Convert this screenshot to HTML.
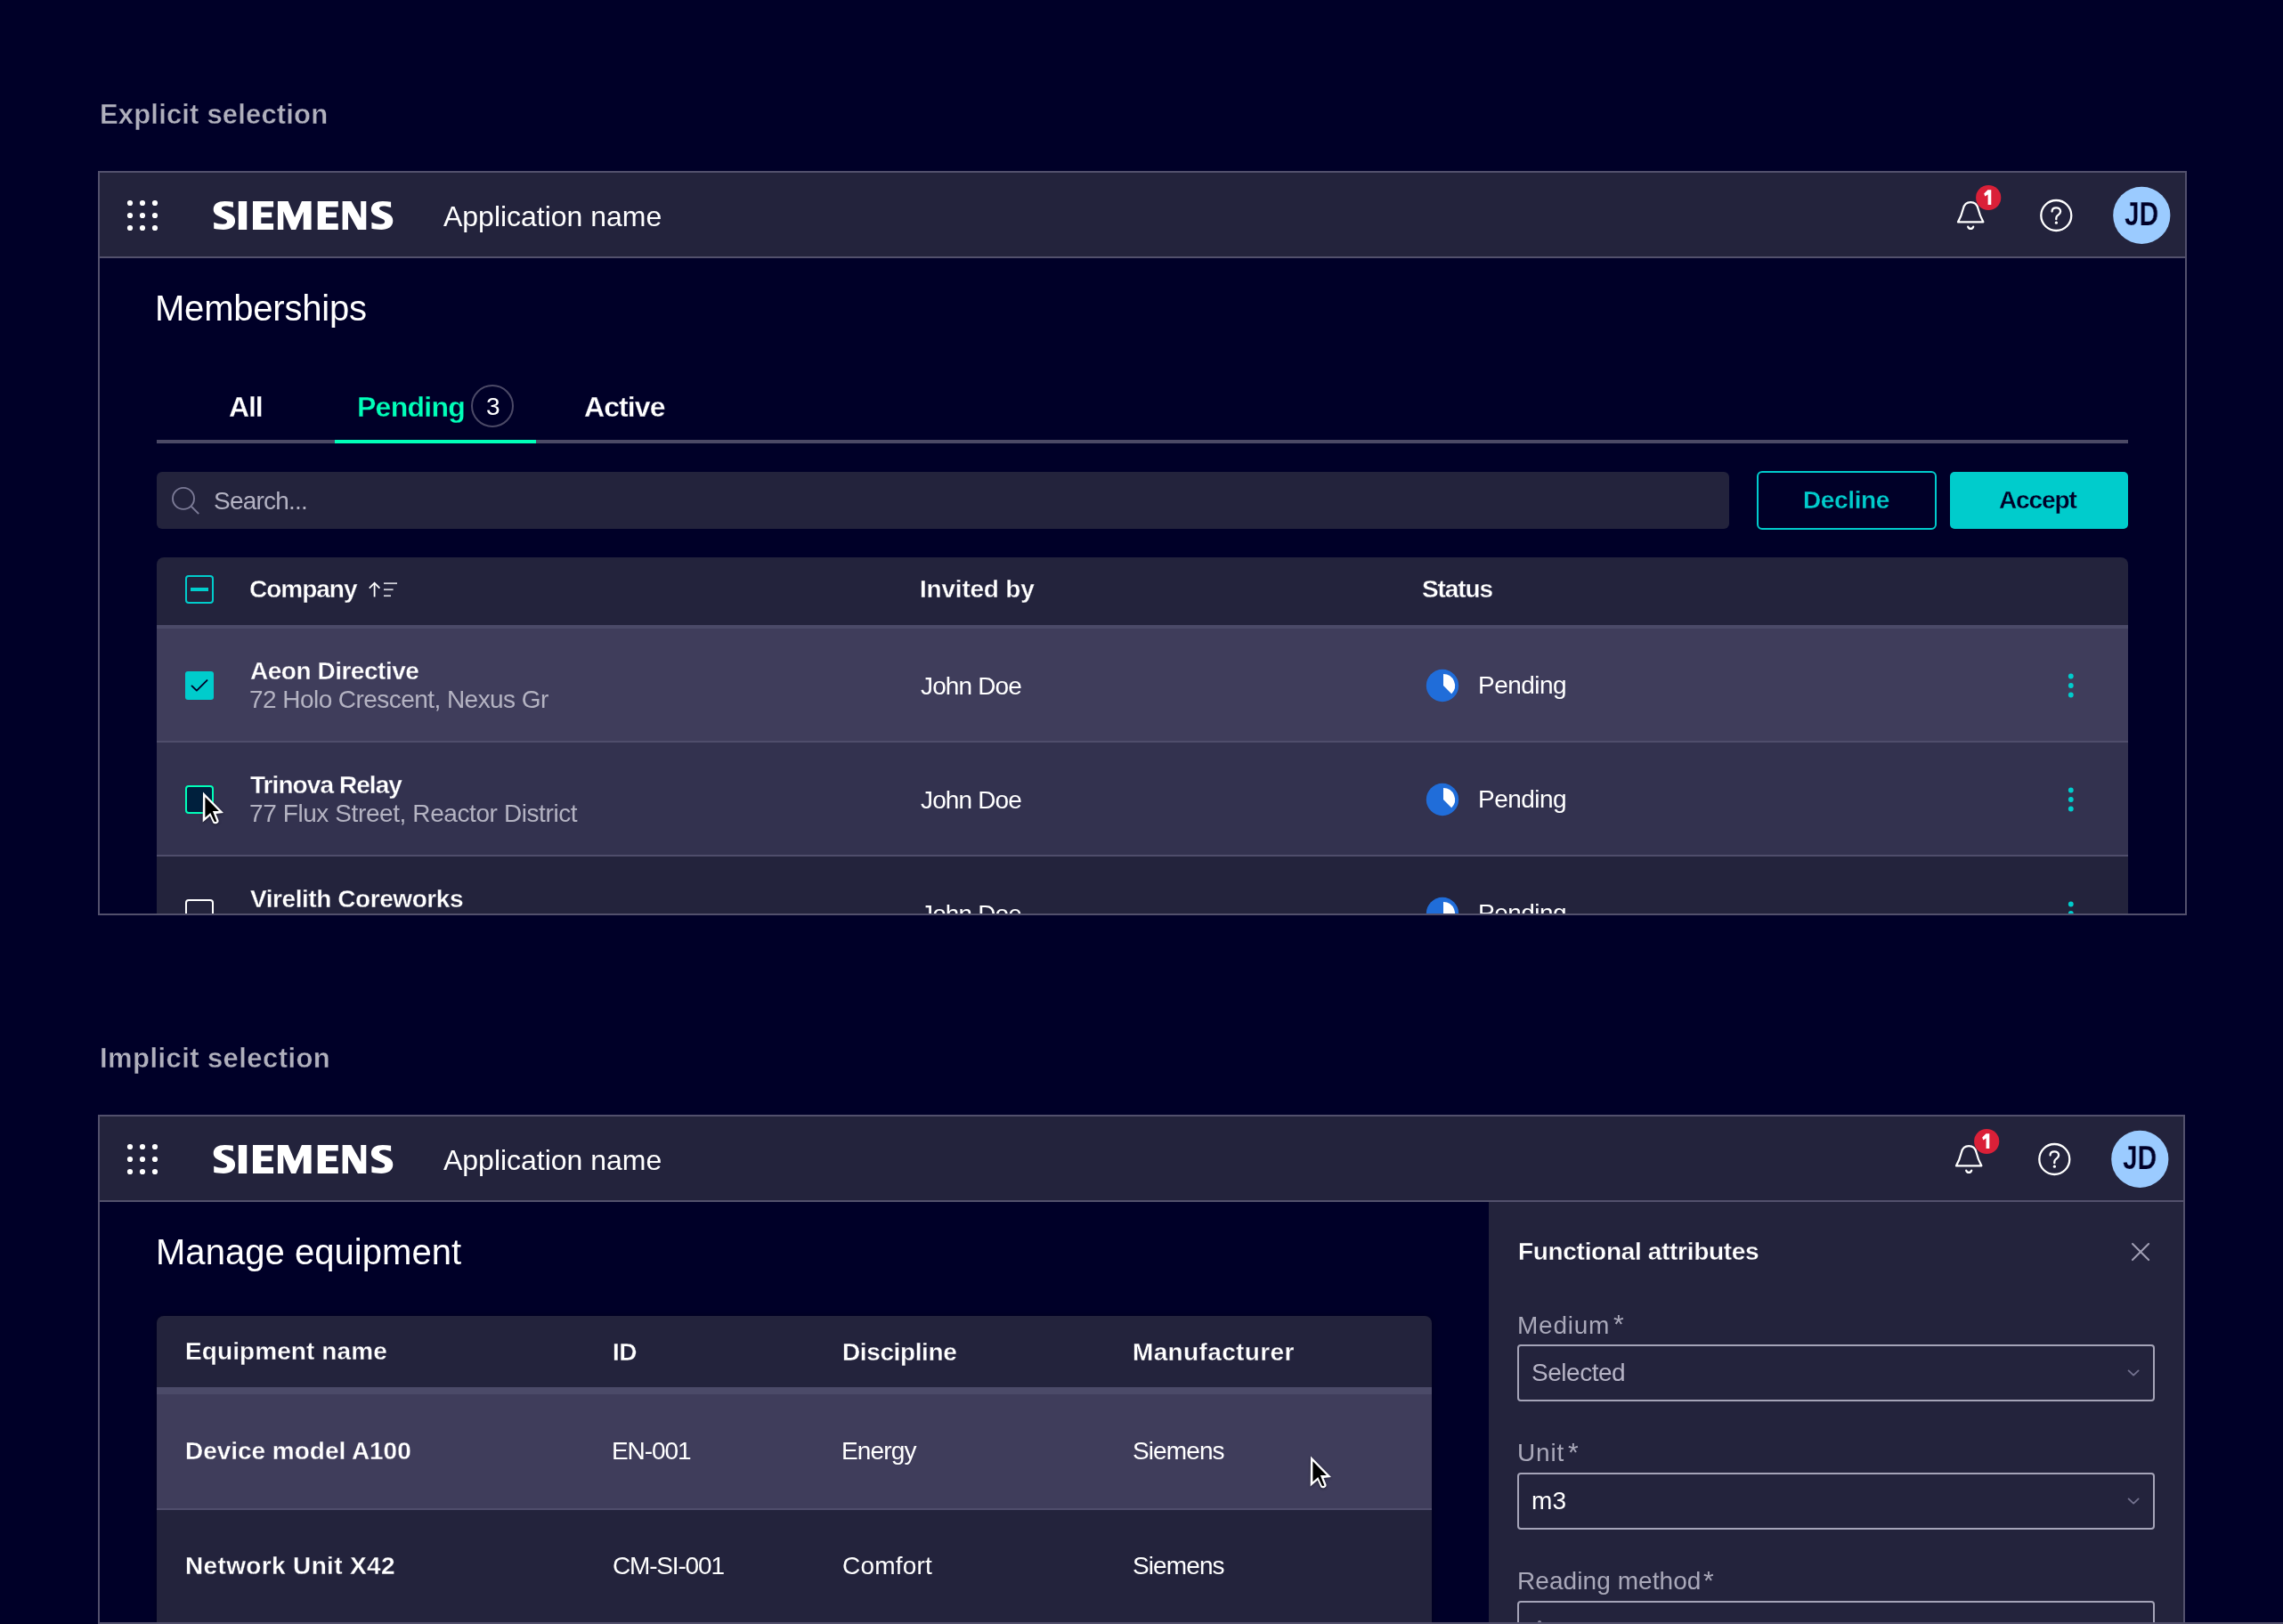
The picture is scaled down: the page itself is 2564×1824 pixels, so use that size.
<!DOCTYPE html><html><head><meta charset="utf-8"><style>
html,body{margin:0;padding:0;width:2564px;height:1824px;overflow:hidden;background:#000028;}
.a{position:absolute;}
.t{position:absolute;will-change:transform;white-space:pre;line-height:1;font-family:"Liberation Sans",sans-serif;}
body{font-family:"Liberation Sans",sans-serif;position:relative;}
</style></head><body>
<div class="t" style="left:112.20px;top:113.45px;font-size:31px;font-weight:700;color:#b0b0bd;-webkit-text-stroke:0.4px #000028;letter-spacing:0.170px;">Explicit selection</div>
<div class="t" style="left:112.20px;top:1173.45px;font-size:31px;font-weight:700;color:#b0b0bd;-webkit-text-stroke:0.4px #000028;letter-spacing:0.425px;">Implicit selection</div>
<div class="a" style="left:112px;top:194px;width:2342px;height:94px;background:#23233c;"></div>
<div class="a" style="left:112px;top:288px;width:2342px;height:2px;background:#52506c;"></div>
<svg class="a" style="left:0;top:0" width="300" height="272"><g fill="#fff"><circle cx="146" cy="228" r="3.1"/><circle cx="146" cy="242" r="3.1"/><circle cx="146" cy="256" r="3.1"/><circle cx="160" cy="228" r="3.1"/><circle cx="160" cy="242" r="3.1"/><circle cx="160" cy="256" r="3.1"/><circle cx="174" cy="228" r="3.1"/><circle cx="174" cy="242" r="3.1"/><circle cx="174" cy="256" r="3.1"/></g></svg>
<svg class="a" style="left:236.00px;top:222.00px;overflow:visible" width="220" height="40" viewBox="0 0 220 40"><g fill="#fff"><path d="M25.9 4.6 L25.9 11.1 C23 10 20 9.5 17.5 9.5 C14.5 9.5 12.8 10.5 12.8 12 C12.8 13.5 14.5 14.3 17 15.4 L22 17.7 C26 19.5 28.1 22 28.1 26 C28.1 32.5 22.5 36 15 36 C10.5 36 7 35.5 4.2 34.8 L4.2 27.8 C7.5 29 10.5 29.8 14 29.8 C17.5 29.8 19 28.5 19 26.8 C19 25 17.3 24.3 14.8 23.2 L10 21 C6 19.2 3.7 17 3.7 13 C3.7 7 9 3.9 16.5 3.9 C19.8 3.9 23 4.2 25.9 4.8 Z"/><path d="M31.8 4 L41.2 4 L41.2 36 L31.8 36 Z"/><path d="M48.00 4.00 L71.10 4.00 L71.10 10.50 L57.30 10.50 L57.30 16.60 L69.20 16.60 L69.20 22.30 L57.30 22.30 L57.30 29.10 L71.10 29.10 L71.10 36.00 L48.00 36.00 Z"/><path d="M75.90 36.00 L75.90 4.00 L87.60 4.00 L95.10 22.20 L102.90 4.00 L113.60 4.00 L113.60 36.00 L104.70 36.00 L104.70 15.80 L96.20 36.00 L91.10 36.00 L82.30 15.30 L82.30 36.00 Z"/><path d="M120.70 4.00 L143.80 4.00 L143.80 10.50 L130.00 10.50 L130.00 16.60 L141.90 16.60 L141.90 22.30 L130.00 22.30 L130.00 29.10 L143.80 29.10 L143.80 36.00 L120.70 36.00 Z"/><path d="M148.60 36.00 L148.60 4.00 L158.50 4.00 L169.20 22.90 L169.20 4.00 L175.30 4.00 L175.30 36.00 L165.90 36.00 L155.00 16.30 L155.00 36.00 Z"/><path transform="translate(177.2 0)" d="M25.9 4.6 L25.9 11.1 C23 10 20 9.5 17.5 9.5 C14.5 9.5 12.8 10.5 12.8 12 C12.8 13.5 14.5 14.3 17 15.4 L22 17.7 C26 19.5 28.1 22 28.1 26 C28.1 32.5 22.5 36 15 36 C10.5 36 7 35.5 4.2 34.8 L4.2 27.8 C7.5 29 10.5 29.8 14 29.8 C17.5 29.8 19 28.5 19 26.8 C19 25 17.3 24.3 14.8 23.2 L10 21 C6 19.2 3.7 17 3.7 13 C3.7 7 9 3.9 16.5 3.9 C19.8 3.9 23 4.2 25.9 4.8 Z"/></g></svg>
<div class="t" style="left:497.70px;top:226.70px;font-size:32px;font-weight:400;color:#ffffff;letter-spacing:-0.013px;">Application name</div>
<svg class="a" style="left:0;top:0;overflow:visible" width="1" height="1"><path d="M2199,249.4 C2202,244 2203.5,240 2204.8,234.5 C2206,229.5 2209,227.2 2213.2,227.2 C2217.4,227.2 2220.4,229.5 2221.6,234.5 C2222.9,240 2224.4,244 2227.4,249.4 Z" fill="none" stroke="#fff" stroke-width="2.2" stroke-linejoin="round"/><path d="M2210.2,254.6 A3.1,3.1 0 0 0 2216.2,254.6" fill="none" stroke="#fff" stroke-width="2.2" stroke-linecap="round"/><circle cx="2233.2" cy="222" r="14.1" fill="#da2038"/><circle cx="2309.3" cy="242" r="17" fill="none" stroke="#fff" stroke-width="2.3"/><path d="M2304.6,237.6 C2304.6,234.6 2306.8,233.3 2309.3,233.3 C2312,233.3 2314.1,235 2314.1,237.6 C2314.1,240.2 2312.3,241 2310.7,242.2 C2309.6,243 2309.3,243.8 2309.3,245.2 L2309.3,246.2" fill="none" stroke="#fff" stroke-width="2.3" stroke-linecap="round"/><circle cx="2309.4" cy="250.2" r="1.6" fill="#fff"/><circle cx="2405.3" cy="241.9" r="32.1" fill="#9bcbff"/></svg>
<svg class="a" style="left:0;top:0;overflow:visible" width="1" height="1"><path d="M2232.5,213.3 L2236.3,213.3 L2236.3,230 L2232.6,230 L2232.6,218.4 L2229.3,220.4 L2228.2,217.4 Z" fill="#fff"/></svg>
<div class="t" style="left:2385.70px;top:223.30px;font-size:36px;font-weight:700;color:#000028;-webkit-text-stroke:0.25px #9bcbff;transform:scaleX(0.8307);transform-origin:0.00px 0;">JD</div>
<div class="a" style="left:0;top:0;width:2564px;height:1824px;clip-path:inset(290px 110px 798px 112px)">
<div class="t" style="left:174.30px;top:326.30px;font-size:40px;font-weight:400;color:#ffffff;letter-spacing:-0.208px;">Memberships</div>
<div class="a" style="left:176px;top:494px;width:2214px;height:4px;background:#4b4966;"></div>
<div class="a" style="left:376px;top:494px;width:226px;height:4px;background:#00ffb9;"></div>
<div class="t" style="left:256.60px;top:440.90px;font-size:32px;font-weight:700;color:#ffffff;-webkit-text-stroke:0.3px #000028;letter-spacing:-1.150px;">All</div>
<div class="t" style="left:400.50px;top:440.90px;font-size:32px;font-weight:700;color:#00ffb9;-webkit-text-stroke:0.3px #000028;letter-spacing:-0.745px;">Pending</div>
<div class="a" style="left:529px;top:432px;width:48px;height:48px;box-sizing:border-box;border:2px solid #4b4966;border-radius:50%"></div>
<div class="t" style="left:545.50px;top:442.80px;font-size:28px;font-weight:400;color:#ffffff;">3</div>
<div class="t" style="left:656.30px;top:441.10px;font-size:32px;font-weight:700;color:#ffffff;-webkit-text-stroke:0.3px #000028;letter-spacing:-0.910px;">Active</div>
<div class="a" style="left:176px;top:530px;width:1766px;height:64px;background:#23233c;border-radius:6px"></div>
<svg class="a" style="left:0;top:0;overflow:visible" width="1" height="1"><circle cx="206" cy="559.9" r="12" fill="none" stroke="#7b7a96" stroke-width="1.9"/><path d="M214.8,568.7 L223.2,577.1" stroke="#7b7a96" stroke-width="2" stroke-linecap="butt"/></svg>
<div class="t" style="left:240.20px;top:548.50px;font-size:28px;font-weight:400;color:#b3b2c2;letter-spacing:-0.784px;">Search...</div>
<div class="a" style="left:1973px;top:529px;width:202px;height:66px;box-sizing:border-box;border:2px solid #00cccc;border-radius:6px"></div>
<div class="t" style="left:2024.70px;top:548.10px;font-size:28px;font-weight:700;color:#00cccc;-webkit-text-stroke:0.3px #000028;letter-spacing:-0.371px;">Decline</div>
<div class="a" style="left:2190px;top:530px;width:200px;height:64px;background:#00cccc;border-radius:5px"></div>
<div class="t" style="left:2245.00px;top:548.10px;font-size:28px;font-weight:700;color:#000028;-webkit-text-stroke:0.3px #00cccc;letter-spacing:-1.108px;">Accept</div>
<div class="a" style="left:176px;top:626px;width:2214px;height:400px;background:#23233c;border-radius:8px 8px 0 0"></div>
<div class="a" style="left:176px;top:702px;width:2214px;height:4px;background:#4b4a68;"></div>
<div class="a" style="left:176px;top:706px;width:2214px;height:126px;background:#3f3d5b;"></div>
<div class="a" style="left:176px;top:832px;width:2214px;height:2px;background:#4f4d6b;"></div>
<div class="a" style="left:176px;top:834px;width:2214px;height:126px;background:#33324f;"></div>
<div class="a" style="left:176px;top:960px;width:2214px;height:2px;background:#4f4d6b;"></div>
<div class="a" style="left:208px;top:646px;width:32px;height:32px;box-sizing:border-box;border:2px solid #00cccc;border-radius:4px"></div>
<div class="a" style="left:214px;top:660px;width:20px;height:3.5px;background:#00cccc;"></div>
<div class="t" style="left:279.60px;top:648.00px;font-size:28px;font-weight:700;color:#ffffff;-webkit-text-stroke:0.3px #23233c;letter-spacing:-1.017px;">Company</div>
<svg class="a" style="left:0;top:0;overflow:visible" width="1" height="1"><g stroke="#fff" stroke-width="1.8" fill="none"><path d="M420.6,670.4 L420.6,655"/><path d="M414.8,660.6 L420.6,654.8 L426.4,660.6"/></g><g stroke="#d0d0d8" stroke-width="1.8"><path d="M431,655.2 L446,655.2"/><path d="M431,662.2 L441.6,662.2"/><path d="M431,669.2 L439,669.2"/></g></svg>
<div class="t" style="left:1033.00px;top:648.00px;font-size:28px;font-weight:700;color:#ffffff;-webkit-text-stroke:0.3px #23233c;letter-spacing:-0.213px;">Invited by</div>
<div class="t" style="left:1596.70px;top:648.00px;font-size:28px;font-weight:700;color:#ffffff;-webkit-text-stroke:0.3px #23233c;letter-spacing:-1.100px;">Status</div>
<div class="t" style="left:280.60px;top:740.40px;font-size:28px;font-weight:700;color:#ffffff;-webkit-text-stroke:0.3px #3f3d5b;letter-spacing:-0.477px;">Aeon Directive</div>
<div class="t" style="left:279.60px;top:772.10px;font-size:28px;font-weight:400;color:#b4b3c2;letter-spacing:-0.552px;">72 Holo Crescent, Nexus Gr</div>
<div class="t" style="left:1034.00px;top:756.50px;font-size:28px;font-weight:400;color:#ffffff;letter-spacing:-0.870px;">John Doe</div>
<svg class="a" style="left:0;top:0;overflow:visible" width="1" height="1"><circle cx="1620" cy="770" r="18.2" fill="#206dd9"/><path d="M1621,770 L1621,757 A13,13 0 0 1 1630.19,779.19 Z" fill="#fff"/></svg>
<div class="t" style="left:1660.10px;top:756.00px;font-size:28px;font-weight:400;color:#ffffff;letter-spacing:-0.531px;">Pending</div>
<svg class="a" style="left:0;top:0;overflow:visible" width="1" height="1"><g fill="#00cccc"><circle cx="2325.8" cy="759.5" r="2.9"/><circle cx="2325.8" cy="770" r="2.9"/><circle cx="2325.8" cy="780.5" r="2.9"/></g></svg>
<div class="t" style="left:280.60px;top:868.40px;font-size:28px;font-weight:700;color:#ffffff;-webkit-text-stroke:0.3px #33324f;letter-spacing:-0.934px;">Trinova Relay</div>
<div class="t" style="left:279.60px;top:900.10px;font-size:28px;font-weight:400;color:#b4b3c2;letter-spacing:-0.408px;">77 Flux Street, Reactor District</div>
<div class="t" style="left:1034.00px;top:884.50px;font-size:28px;font-weight:400;color:#ffffff;letter-spacing:-0.870px;">John Doe</div>
<svg class="a" style="left:0;top:0;overflow:visible" width="1" height="1"><circle cx="1620" cy="898" r="18.2" fill="#206dd9"/><path d="M1621,898 L1621,885 A13,13 0 0 1 1630.19,907.19 Z" fill="#fff"/></svg>
<div class="t" style="left:1660.10px;top:884.00px;font-size:28px;font-weight:400;color:#ffffff;letter-spacing:-0.531px;">Pending</div>
<svg class="a" style="left:0;top:0;overflow:visible" width="1" height="1"><g fill="#00cccc"><circle cx="2325.8" cy="887.5" r="2.9"/><circle cx="2325.8" cy="898" r="2.9"/><circle cx="2325.8" cy="908.5" r="2.9"/></g></svg>
<div class="t" style="left:280.60px;top:996.40px;font-size:28px;font-weight:700;color:#ffffff;-webkit-text-stroke:0.3px #23233c;letter-spacing:-0.437px;">Virelith Coreworks</div>
<div class="t" style="left:1034.00px;top:1012.50px;font-size:28px;font-weight:400;color:#ffffff;letter-spacing:-0.870px;">John Doe</div>
<svg class="a" style="left:0;top:0;overflow:visible" width="1" height="1"><circle cx="1620" cy="1026" r="18.2" fill="#206dd9"/><path d="M1621,1026 L1621,1013 A13,13 0 0 1 1630.19,1035.19 Z" fill="#fff"/></svg>
<div class="t" style="left:1660.10px;top:1012.00px;font-size:28px;font-weight:400;color:#ffffff;letter-spacing:-0.531px;">Pending</div>
<svg class="a" style="left:0;top:0;overflow:visible" width="1" height="1"><g fill="#00cccc"><circle cx="2325.8" cy="1015.5" r="2.9"/><circle cx="2325.8" cy="1026" r="2.9"/><circle cx="2325.8" cy="1036.5" r="2.9"/></g></svg>
<div class="a" style="left:208px;top:754px;width:32px;height:32px;background:#00cccc;border-radius:3px"></div>
<svg class="a" style="left:0;top:0;overflow:visible" width="1" height="1"><path d="M215.5,770.4 L220.9,775.6 L232.5,764.1" fill="none" stroke="#000028" stroke-width="1.9" stroke-linecap="round" stroke-linejoin="round"/></svg>
<div class="a" style="left:208px;top:882px;width:32px;height:32px;box-sizing:border-box;background:#00203d;border:2px solid #00ffb9;border-radius:4px"></div>
<div class="a" style="left:208px;top:1010px;width:32px;height:32px;box-sizing:border-box;border:2px solid #ffffff;border-radius:4px"></div>
</div>
<div class="a" style="left:110px;top:192px;width:2346px;height:836px;box-sizing:border-box;border:2px solid #52506c;border-bottom-width:2px"></div>
<svg class="a" style="left:223.5px;top:886.3px;overflow:visible;filter:drop-shadow(0 1px 1.5px rgba(0,0,0,0.45))" width="32" height="44" viewBox="-4 -4 32 44"><path d="M0,-0.6 L-0.3,33.6 L7.8,26.6 L11.3,34.2 Q12.6,35.8 15.3,35.1 Q18.1,33.9 17.5,31.3 L14.5,23.9 L23,23.1 Z" fill="#fff"/><path d="M2.4,5.2 L2.4,28.2 L8.3,22.9 L12.7,32.5 Q13.9,33.6 15.4,32.6 L10.9,20.9 L17.9,20.9 Z" fill="#000"/></svg>
<div class="a" style="left:112px;top:1254px;width:2340px;height:94px;background:#23233c;"></div>
<div class="a" style="left:112px;top:1348px;width:2340px;height:2px;background:#52506c;"></div>
<svg class="a" style="left:0;top:0" width="300" height="1332"><g fill="#fff"><circle cx="146" cy="1288" r="3.1"/><circle cx="146" cy="1302" r="3.1"/><circle cx="146" cy="1316" r="3.1"/><circle cx="160" cy="1288" r="3.1"/><circle cx="160" cy="1302" r="3.1"/><circle cx="160" cy="1316" r="3.1"/><circle cx="174" cy="1288" r="3.1"/><circle cx="174" cy="1302" r="3.1"/><circle cx="174" cy="1316" r="3.1"/></g></svg>
<svg class="a" style="left:236.00px;top:1282.00px;overflow:visible" width="220" height="40" viewBox="0 0 220 40"><g fill="#fff"><path d="M25.9 4.6 L25.9 11.1 C23 10 20 9.5 17.5 9.5 C14.5 9.5 12.8 10.5 12.8 12 C12.8 13.5 14.5 14.3 17 15.4 L22 17.7 C26 19.5 28.1 22 28.1 26 C28.1 32.5 22.5 36 15 36 C10.5 36 7 35.5 4.2 34.8 L4.2 27.8 C7.5 29 10.5 29.8 14 29.8 C17.5 29.8 19 28.5 19 26.8 C19 25 17.3 24.3 14.8 23.2 L10 21 C6 19.2 3.7 17 3.7 13 C3.7 7 9 3.9 16.5 3.9 C19.8 3.9 23 4.2 25.9 4.8 Z"/><path d="M31.8 4 L41.2 4 L41.2 36 L31.8 36 Z"/><path d="M48.00 4.00 L71.10 4.00 L71.10 10.50 L57.30 10.50 L57.30 16.60 L69.20 16.60 L69.20 22.30 L57.30 22.30 L57.30 29.10 L71.10 29.10 L71.10 36.00 L48.00 36.00 Z"/><path d="M75.90 36.00 L75.90 4.00 L87.60 4.00 L95.10 22.20 L102.90 4.00 L113.60 4.00 L113.60 36.00 L104.70 36.00 L104.70 15.80 L96.20 36.00 L91.10 36.00 L82.30 15.30 L82.30 36.00 Z"/><path d="M120.70 4.00 L143.80 4.00 L143.80 10.50 L130.00 10.50 L130.00 16.60 L141.90 16.60 L141.90 22.30 L130.00 22.30 L130.00 29.10 L143.80 29.10 L143.80 36.00 L120.70 36.00 Z"/><path d="M148.60 36.00 L148.60 4.00 L158.50 4.00 L169.20 22.90 L169.20 4.00 L175.30 4.00 L175.30 36.00 L165.90 36.00 L155.00 16.30 L155.00 36.00 Z"/><path transform="translate(177.2 0)" d="M25.9 4.6 L25.9 11.1 C23 10 20 9.5 17.5 9.5 C14.5 9.5 12.8 10.5 12.8 12 C12.8 13.5 14.5 14.3 17 15.4 L22 17.7 C26 19.5 28.1 22 28.1 26 C28.1 32.5 22.5 36 15 36 C10.5 36 7 35.5 4.2 34.8 L4.2 27.8 C7.5 29 10.5 29.8 14 29.8 C17.5 29.8 19 28.5 19 26.8 C19 25 17.3 24.3 14.8 23.2 L10 21 C6 19.2 3.7 17 3.7 13 C3.7 7 9 3.9 16.5 3.9 C19.8 3.9 23 4.2 25.9 4.8 Z"/></g></svg>
<div class="t" style="left:497.70px;top:1286.70px;font-size:32px;font-weight:400;color:#ffffff;letter-spacing:-0.013px;">Application name</div>
<svg class="a" style="left:0;top:0;overflow:visible" width="1" height="1"><path d="M2197,1309.4 C2200,1304 2201.5,1300 2202.8,1294.5 C2204,1289.5 2207,1287.2 2211.2,1287.2 C2215.4,1287.2 2218.4,1289.5 2219.6,1294.5 C2220.9,1300 2222.4,1304 2225.4,1309.4 Z" fill="none" stroke="#fff" stroke-width="2.2" stroke-linejoin="round"/><path d="M2208.2,1314.6 A3.1,3.1 0 0 0 2214.2,1314.6" fill="none" stroke="#fff" stroke-width="2.2" stroke-linecap="round"/><circle cx="2231.2" cy="1282" r="14.1" fill="#da2038"/><circle cx="2307.3" cy="1302" r="17" fill="none" stroke="#fff" stroke-width="2.3"/><path d="M2302.6,1297.6 C2302.6,1294.6 2304.8,1293.3 2307.3,1293.3 C2310,1293.3 2312.1,1295 2312.1,1297.6 C2312.1,1300.2 2310.3,1301 2308.7,1302.2 C2307.6,1303 2307.3,1303.8 2307.3,1305.2 L2307.3,1306.2" fill="none" stroke="#fff" stroke-width="2.3" stroke-linecap="round"/><circle cx="2307.4" cy="1310.2" r="1.6" fill="#fff"/><circle cx="2403.3" cy="1301.9" r="32.1" fill="#9bcbff"/></svg>
<svg class="a" style="left:0;top:0;overflow:visible" width="1" height="1"><path d="M2230.5,1273.3 L2234.3,1273.3 L2234.3,1290 L2230.6,1290 L2230.6,1278.4 L2227.3,1280.4 L2226.2,1277.4 Z" fill="#fff"/></svg>
<div class="t" style="left:2383.70px;top:1283.30px;font-size:36px;font-weight:700;color:#000028;-webkit-text-stroke:0.25px #9bcbff;transform:scaleX(0.8307);transform-origin:0.00px 0;">JD</div>
<div class="a" style="left:0;top:0;width:2564px;height:1824px;clip-path:inset(1350px 112px 2px 112px)">
<div class="t" style="left:175.10px;top:1386.30px;font-size:40px;font-weight:400;color:#ffffff;letter-spacing:0.043px;">Manage equipment</div>
<div class="a" style="left:176px;top:1478px;width:1432px;height:400px;background:#23233c;border-radius:8px 8px 0 0;box-shadow:0 0 6px rgba(0,0,0,0.25)"></div>
<div class="a" style="left:176px;top:1558px;width:1432px;height:8px;background:#4b4a68;"></div>
<div class="a" style="left:176px;top:1566px;width:1432px;height:128px;background:#3f3d5b;"></div>
<div class="a" style="left:176px;top:1694px;width:1432px;height:2px;background:#4f4d6b;"></div>
<div class="t" style="left:207.80px;top:1504.20px;font-size:28px;font-weight:700;color:#ffffff;-webkit-text-stroke:0.3px #23233c;letter-spacing:0.091px;">Equipment name</div>
<div class="t" style="left:687.70px;top:1504.70px;font-size:28px;font-weight:700;color:#ffffff;-webkit-text-stroke:0.3px #23233c;letter-spacing:-0.479px;">ID</div>
<div class="t" style="left:946.30px;top:1504.70px;font-size:28px;font-weight:700;color:#ffffff;-webkit-text-stroke:0.3px #23233c;letter-spacing:-0.388px;">Discipline</div>
<div class="t" style="left:1272.20px;top:1504.70px;font-size:28px;font-weight:700;color:#ffffff;-webkit-text-stroke:0.3px #23233c;letter-spacing:0.357px;">Manufacturer</div>
<div class="t" style="left:207.80px;top:1616.40px;font-size:28px;font-weight:700;color:#ffffff;-webkit-text-stroke:0.3px #3f3d5b;letter-spacing:-0.029px;">Device model A100</div>
<div class="t" style="left:686.70px;top:1616.20px;font-size:28px;font-weight:400;color:#ffffff;letter-spacing:-1.093px;">EN-001</div>
<div class="t" style="left:945.30px;top:1616.20px;font-size:28px;font-weight:400;color:#ffffff;letter-spacing:-0.863px;">Energy</div>
<div class="t" style="left:1272.20px;top:1616.20px;font-size:28px;font-weight:400;color:#ffffff;letter-spacing:-0.890px;">Siemens</div>
<div class="t" style="left:207.80px;top:1744.80px;font-size:28px;font-weight:700;color:#ffffff;-webkit-text-stroke:0.3px #23233c;letter-spacing:0.353px;">Network Unit X42</div>
<div class="t" style="left:687.70px;top:1744.80px;font-size:28px;font-weight:400;color:#ffffff;letter-spacing:-1.174px;">CM-SI-001</div>
<div class="t" style="left:946.30px;top:1744.80px;font-size:28px;font-weight:400;color:#ffffff;letter-spacing:0.185px;">Comfort</div>
<div class="t" style="left:1272.20px;top:1744.80px;font-size:28px;font-weight:400;color:#ffffff;letter-spacing:-0.890px;">Siemens</div>
<div class="a" style="left:1672px;top:1350px;width:780px;height:474px;background:#23233c;"></div>
<div class="t" style="left:1704.90px;top:1392.40px;font-size:28px;font-weight:700;color:#ffffff;-webkit-text-stroke:0.3px #23233c;letter-spacing:-0.316px;">Functional attributes</div>
<svg class="a" style="left:0;top:0;overflow:visible" width="1" height="1"><g stroke="#9f9db2" stroke-width="2.1" stroke-linecap="round"><path d="M2395,1397 L2413.1,1415.1"/><path d="M2413.1,1397 L2395,1415.1"/></g></svg>
<div class="t" style="left:1703.50px;top:1474.60px;font-size:28px;font-weight:400;color:#a9a8b9;letter-spacing:0.768px;">Medium</div>
<div class="t" style="left:1811.50px;top:1471.90px;font-size:30px;font-weight:400;color:#a9a8b9;">*</div>
<div class="a" style="left:1704px;top:1510px;width:716px;height:64px;box-sizing:border-box;border:2px solid #a5a4b8;border-radius:4px"></div>
<div class="t" style="left:1719.90px;top:1528.20px;font-size:28px;font-weight:400;color:#b5b3c5;letter-spacing:-0.470px;">Selected</div>
<svg class="a" style="left:0;top:0;overflow:visible" width="1" height="1"><path d="M2390.6,1539.4 L2396.1,1544.6 L2401.6,1539.4" fill="none" stroke="#72718e" stroke-width="1.9" stroke-linecap="round" stroke-linejoin="round"/></svg>
<div class="t" style="left:1703.50px;top:1618.30px;font-size:28px;font-weight:400;color:#a9a8b9;letter-spacing:0.795px;">Unit</div>
<div class="t" style="left:1761.20px;top:1615.60px;font-size:30px;font-weight:400;color:#a9a8b9;">*</div>
<div class="a" style="left:1704px;top:1654px;width:716px;height:64px;box-sizing:border-box;border:2px solid #a5a4b8;border-radius:4px"></div>
<div class="t" style="left:1719.90px;top:1672.20px;font-size:28px;font-weight:400;color:#ffffff;letter-spacing:0.176px;">m3</div>
<svg class="a" style="left:0;top:0;overflow:visible" width="1" height="1"><path d="M2390.6,1683.4 L2396.1,1688.6 L2401.6,1683.4" fill="none" stroke="#72718e" stroke-width="1.9" stroke-linecap="round" stroke-linejoin="round"/></svg>
<div class="t" style="left:1703.50px;top:1762.40px;font-size:28px;font-weight:400;color:#a9a8b9;letter-spacing:0.069px;">Reading method</div>
<div class="t" style="left:1913.00px;top:1759.70px;font-size:30px;font-weight:400;color:#a9a8b9;">*</div>
<div class="a" style="left:1704px;top:1798px;width:716px;height:64px;box-sizing:border-box;border:2px solid #a5a4b8;border-radius:4px"></div>
<svg class="a" style="left:0;top:0;overflow:visible" width="1" height="1"><path d="M2390.6,1827.4 L2396.1,1832.6 L2401.6,1827.4" fill="none" stroke="#72718e" stroke-width="1.9" stroke-linecap="round" stroke-linejoin="round"/></svg>
<div class="a" style="left:1726.8px;top:1820px;width:4px;height:2.5px;background:#8c8ba0;border-radius:2px 2px 0 0"></div>
</div>
<svg class="a" style="left:1467.9px;top:1632px;overflow:visible;filter:drop-shadow(0 1px 1.5px rgba(0,0,0,0.45))" width="32" height="44" viewBox="-4 -4 32 44"><path d="M0,-0.6 L-0.3,33.6 L7.8,26.6 L11.3,34.2 Q12.6,35.8 15.3,35.1 Q18.1,33.9 17.5,31.3 L14.5,23.9 L23,23.1 Z" fill="#fff"/><path d="M2.4,5.2 L2.4,28.2 L8.3,22.9 L12.7,32.5 Q13.9,33.6 15.4,32.6 L10.9,20.9 L17.9,20.9 Z" fill="#000"/></svg>
<div class="a" style="left:110px;top:1252px;width:2344px;height:648px;box-sizing:border-box;border:2px solid #52506c;border-bottom-width:0"></div>
<div class="a" style="left:110px;top:1822px;width:2454px;height:2px;background:#52506c;"></div>
</body></html>
